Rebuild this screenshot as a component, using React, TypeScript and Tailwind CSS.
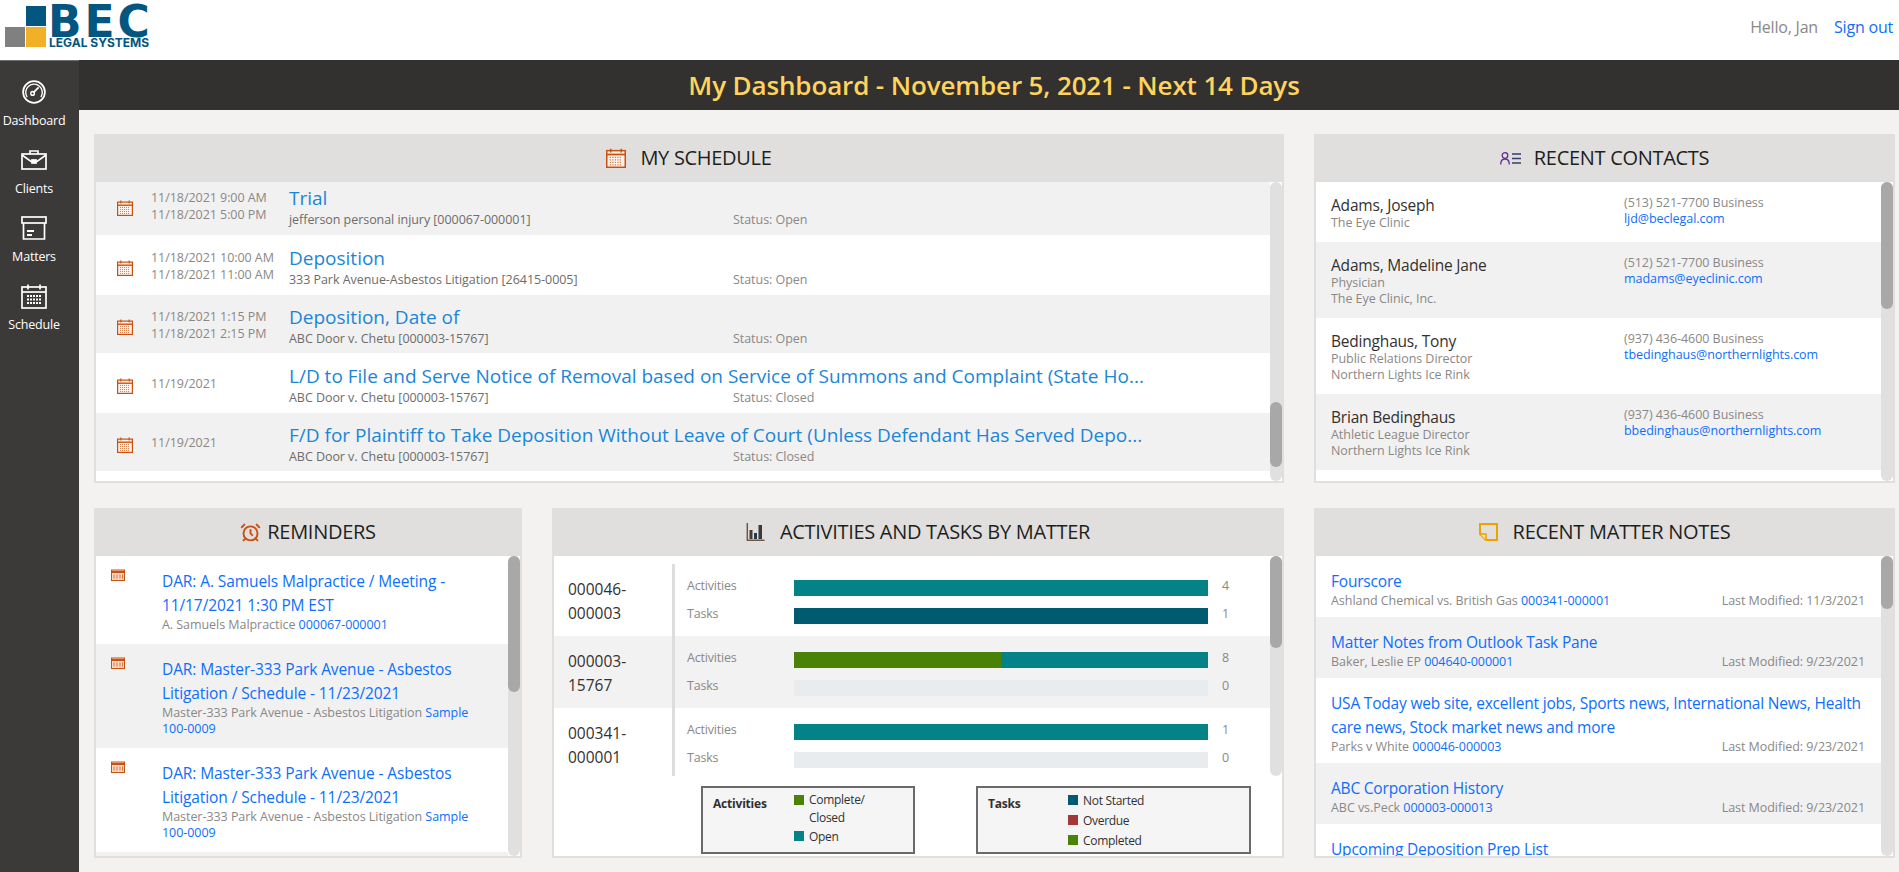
import type { ReactNode } from 'react';
import { AlarmClock } from 'lucide-react';

const FONT = "font-['Open_Sans','Noto_Sans',sans-serif]";

function CalendarIcon({ className }: { className: string }) {
  return (
    <svg viewBox="0 0 16 16" fill="none" className={className}>
      <rect x="0.6" y="2.1" width="14.8" height="13.3" stroke="#ca5010" strokeWidth="1.2" fill="#fdf3ec" />
      <path d="M0.6 5.2h14.8" stroke="#ca5010" strokeWidth="1.4" />
      <path d="M3.8 0.5v3M12.2 0.5v3" stroke="#ca5010" strokeWidth="1.2" />
      <path d="M3 7.5h10M3 9.5h10M3 11.5h10M3 13.5h10" stroke="#ca5010" strokeWidth="1" strokeDasharray="1 1" opacity="0.7" />
    </svg>
  );
}

function ReminderIcon() {
  return (
    <svg viewBox="0 0 14 12" fill="none" className="w-[14px] h-[12px] shrink-0">
      <rect x="0.5" y="1" width="13" height="10.5" stroke="#ca5010" fill="#f7d9c4" />
      <path d="M0.5 3h13" stroke="#ca5010" strokeWidth="2" />
      <path d="M3 5.5v4M6 5.5v4M9 5.5v4M11.5 5.5v4" stroke="#ca5010" strokeWidth="1" opacity="0.75" />
    </svg>
  );
}

function ContactsIcon() {
  return (
    <svg viewBox="0 0 21 13" fill="none" stroke="#5c2e91" strokeWidth="1.3" className="w-[21px] h-[13px]">
      <circle cx="5" cy="3.5" r="2.8" />
      <path d="M0.7 12.5c0-3.5 1.6-5.5 4.3-5.5s4.3 2 4.3 5.5" />
      <path d="M12 2h9M12 6.5h9M12 11h9" stroke="#3b3a6b" />
    </svg>
  );
}

function ChartIcon() {
  return (
    <svg viewBox="0 0 18 18" className="w-[19px] h-[18px]">
      <path d="M0.8 0v17.2H18" fill="none" stroke="#6b5a4a" strokeWidth="1.5" />
      <rect x="3" y="7" width="3" height="9" fill="#4a3a2c" />
      <rect x="7.5" y="10" width="3" height="6" fill="#1f3a54" />
      <rect x="12" y="2" width="3.5" height="14" fill="#3a3a3a" />
    </svg>
  );
}

function NoteIcon() {
  return (
    <svg viewBox="0 0 19 18" fill="none" className="w-[19px] h-[18px]">
      <path d="M1 1h17v16H7L1 11z" stroke="#eaa300" strokeWidth="2" />
      <path d="M1 11h6v6" stroke="#eaa300" strokeWidth="1.5" fill="#f7dc8a" />
    </svg>
  );
}

function GaugeIcon() {
  return (
    <svg viewBox="0 0 26 26" fill="none" stroke="#fff" className="w-[24px] h-[24px]">
      <circle cx="13" cy="13" r="11.8" strokeWidth="1.9" />
      <path d="M5.5 18.5a9 9 0 1 1 15 0" strokeWidth="1.5" />
      <path d="M12 14l6-6" strokeWidth="1.8" />
      <circle cx="11.5" cy="14.5" r="2" strokeWidth="1.5" />
    </svg>
  );
}

function BriefcaseIcon() {
  return (
    <svg viewBox="0 0 26 20" fill="none" stroke="#fff" strokeWidth="1.7" className="w-[26px] h-[20px]">
      <rect x="1" y="4" width="24" height="15" />
      <path d="M9 4V1h8v3" />
      <path d="M1 5l9 6.5h6L25 5" />
      <rect x="11" y="10" width="4" height="3" fill="#fff" />
    </svg>
  );
}

function ArchiveIcon() {
  return (
    <svg viewBox="0 0 26 24" fill="none" stroke="#fff" strokeWidth="1.7" className="w-[26px] h-[24px]">
      <rect x="1" y="1" width="24" height="6" />
      <path d="M2.5 7v16h21V7" />
      <path d="M6 15h7" strokeWidth="2" />
      <path d="M6 19h5" strokeWidth="2" />
    </svg>
  );
}

function ScheduleIcon() {
  return (
    <svg viewBox="0 0 26 25" fill="none" stroke="#fff" strokeWidth="1.7" className="w-[26px] h-[25px]">
      <rect x="1" y="3" width="24" height="21" />
      <path d="M1 8h24" />
      <path d="M7 0.5v5M19 0.5v5" />
      <path d="M6 12h14M6 15.5h14M6 19h14" strokeWidth="2" strokeDasharray="2 1" />
    </svg>
  );
}

function Logo() {
  return (
    <div className="flex items-start pl-[5px] pt-[6px]">
      <div className="grid grid-cols-[20px_20px] grid-rows-[20px_20px] gap-[1px] mr-[2px]">
        <div />
        <div className="bg-[#03567f]" />
        <div className="bg-[#808080]" />
        <div className="bg-[#f2b027]" />
      </div>
      <div className="flex flex-col w-[102px] text-[#03567f]">
        <span className="text-[44px] leading-[31px] h-[32px] font-bold tracking-[3px] font-['DejaVu_Sans',sans-serif]">BEC</span>
        <span className="pl-[1px] text-[12px] leading-[10px] font-bold whitespace-nowrap font-['Inter',sans-serif]">LEGAL SYSTEMS</span>
      </div>
    </div>
  );
}

function Scrollbar({ thumb }: { thumb: string }) {
  return (
    <div className="w-3 shrink-0 rounded-md bg-[#e0e0e0]">
      <div className={`${thumb} rounded-md bg-[#a8a8a8]`} />
    </div>
  );
}

function Panel({ icon, title, gap, width, children }: { icon: ReactNode; title: string; gap: string; width: string; children: ReactNode }) {
  return (
    <section className={`${width} flex flex-col border-x-2 border-b-2 border-[#e1dfdd] bg-white`}>
      <h2 className={`-mx-[2px] h-[48px] shrink-0 bg-[#e1dfdd] flex items-center justify-center ${gap} text-[20px] tracking-[-0.3px] text-[#201f1e] font-medium`}>
        {icon}
        <span>{title}</span>
      </h2>
      {children}
    </section>
  );
}

const scheduleRows = [
  { h: 'h-[60px]', bg: 'bg-[#f1f1f1]', times: ['11/18/2021 9:00 AM', '11/18/2021 5:00 PM'], title: 'Trial', matter: 'jefferson personal injury [000067-000001]', status: 'Open' },
  { h: 'h-[60px]', bg: 'bg-white', times: ['11/18/2021 10:00 AM', '11/18/2021 11:00 AM'], title: 'Deposition', matter: '333 Park Avenue-Asbestos Litigation [26415-0005]', status: 'Open' },
  { h: 'h-[58px]', bg: 'bg-[#f1f1f1]', times: ['11/18/2021 1:15 PM', '11/18/2021 2:15 PM'], title: 'Deposition, Date of', matter: 'ABC Door v. Chetu [000003-15767]', status: 'Open' },
  { h: 'h-[60px]', bg: 'bg-white', times: ['11/19/2021'], title: 'L/D to File and Serve Notice of Removal based on Service of Summons and Complaint (State Ho...', matter: 'ABC Door v. Chetu [000003-15767]', status: 'Closed' },
  { h: 'h-[58px]', bg: 'bg-[#f1f1f1]', times: ['11/19/2021'], title: 'F/D for Plaintiff to Take Deposition Without Leave of Court (Unless Defendant Has Served Depo...', matter: 'ABC Door v. Chetu [000003-15767]', status: 'Closed' },
];

const contacts = [
  { h: 'h-[60px]', bg: 'bg-white', name: 'Adams, Joseph', sub: ['The Eye Clinic'], phone: '(513) 521-7700 Business', email: 'ljd@beclegal.com' },
  { h: 'h-[76px]', bg: 'bg-[#f1f1f1]', name: 'Adams, Madeline Jane', sub: ['Physician', 'The Eye Clinic, Inc.'], phone: '(512) 521-7700 Business', email: 'madams@eyeclinic.com' },
  { h: 'h-[76px]', bg: 'bg-white', name: 'Bedinghaus, Tony', sub: ['Public Relations Director', 'Northern Lights Ice Rink'], phone: '(937) 436-4600 Business', email: 'tbedinghaus@northernlights.com' },
  { h: 'h-[76px]', bg: 'bg-[#f1f1f1]', name: 'Brian Bedinghaus', sub: ['Athletic League Director', 'Northern Lights Ice Rink'], phone: '(937) 436-4600 Business', email: 'bbedinghaus@northernlights.com' },
];

const reminders = [
  { h: 'h-[88px]', bg: 'bg-white', title: ['DAR: A. Samuels Malpractice / Meeting -', '11/17/2021 1:30 PM EST'], matter: 'A. Samuels Malpractice', num: '000067-000001', numBreak: false },
  { h: 'h-[104px]', bg: 'bg-[#f1f1f1]', title: ['DAR: Master-333 Park Avenue - Asbestos', 'Litigation / Schedule - 11/23/2021'], matter: 'Master-333 Park Avenue - Asbestos Litigation', num: 'Sample', numBreak: true },
  { h: 'h-[104px]', bg: 'bg-white', title: ['DAR: Master-333 Park Avenue - Asbestos', 'Litigation / Schedule - 11/23/2021'], matter: 'Master-333 Park Avenue - Asbestos Litigation', num: 'Sample', numBreak: true },
];

const matters = [
  { id: ['000046-', '000003'], h: 'h-[80px]', idPad: 'pt-[21px]', barPad: 'pt-6', rule: 'mt-2', bg: 'bg-white', activities: { done: 0, open: 100, count: 4 }, tasks: { color: 'bg-[#005b70]', w: 'w-full', count: 1 } },
  { id: ['000003-', '15767'], h: 'h-[72px]', idPad: 'pt-[13px]', barPad: 'pt-4', rule: '', bg: 'bg-[#f2f2f2]', activities: { done: 50, open: 50, count: 8 }, tasks: { color: '', w: 'w-0', count: 0 } },
  { id: ['000341-', '000001'], h: 'h-[68px]', idPad: 'pt-[13px]', barPad: 'pt-4', rule: '', bg: 'bg-white', activities: { done: 0, open: 100, count: 1 }, tasks: { color: '', w: 'w-0', count: 0 } },
];

const notes = [
  { h: 'h-[61px]', bg: 'bg-white', title: ['Fourscore'], matter: 'Ashland Chemical vs. British Gas', num: '000341-000001', modified: '11/3/2021' },
  { h: 'h-[61px]', bg: 'bg-[#f1f1f1]', title: ['Matter Notes from Outlook Task Pane'], matter: 'Baker, Leslie EP', num: '004640-000001', modified: '9/23/2021' },
  { h: 'h-[85px]', bg: 'bg-white', title: ['USA Today web site, excellent jobs, Sports news, International News, Health', 'care news, Stock market news and more'], matter: 'Parks v White', num: '000046-000003', modified: '9/23/2021' },
  { h: 'h-[61px]', bg: 'bg-[#f1f1f1]', title: ['ABC Corporation History'], matter: 'ABC vs.Peck', num: '000003-000013', modified: '9/23/2021' },
];

const navItems = [
  { label: 'Dashboard', icon: <GaugeIcon />, pad: 'pt-[18px]' },
  { label: 'Clients', icon: <BriefcaseIcon />, pad: 'pt-[16px]' },
  { label: 'Matters', icon: <ArchiveIcon />, pad: 'pt-[16px]' },
  { label: 'Schedule', icon: <ScheduleIcon />, pad: 'pt-[16px]' },
];

function Sidebar() {
  return (
    <aside className="w-[79px] shrink-0 pr-[11px] bg-[#3b3a39] border-t border-[#6e6d6c] flex flex-col items-center">
      {navItems.map((item) => (
        <a key={item.label} className={`${item.pad} flex flex-col items-center text-white`}>
          <div className="h-[26px] flex items-center justify-center">{item.icon}</div>
          <span className="mt-[6px] text-[12.5px] leading-[20px] tracking-[-0.2px]">{item.label}</span>
        </a>
      ))}
    </aside>
  );
}

function Legend({ label, width, labelWidth, children }: { label: string; width: string; labelWidth: string; children: ReactNode }) {
  return (
    <div className={`${width} h-[68px] border-2 border-[#6b6b6b] bg-[#f5f5f5] flex pl-[10px] pt-[5px] text-[12px] text-[#323130]`}>
      <div className={`${labelWidth} shrink-0 font-bold leading-[20px] pt-[1px] tracking-[-0.2px]`}>{label}</div>
      <div className="-mt-[1px]">{children}</div>
    </div>
  );
}

function Swatch({ color, children }: { color: string; children: ReactNode }) {
  return (
    <div className="flex items-start gap-[5px] leading-[18px] tracking-[-0.3px] mb-[2px]">
      <span className={`${color} w-[10px] h-[10px] mt-[3px] shrink-0`} />
      <span>{children}</span>
    </div>
  );
}

function Bar({ label, count, children }: { label: string; count: number; children: ReactNode }) {
  return (
    <div className="flex items-center h-[16px] mb-[12px]">
      <span className="w-[107px] text-[12.5px] text-[#8a8886] tracking-[-0.2px] -mt-[4px]">{label}</span>
      <div className="w-[414px] h-[16px] bg-[#e9ecef] flex">{children}</div>
      <span className="ml-[14px] text-[12.5px] text-[#8a8886] -mt-[4px]">{count}</span>
    </div>
  );
}

export default function App() {
  return (
    <div className={`h-[872px] w-[1899px] overflow-hidden flex flex-col bg-white ${FONT}`}>
      <header className="h-[60px] shrink-0 flex justify-between">
        <Logo />
        <div className="flex items-start pt-[15px] pr-[6px] text-[16px] leading-[24px] tracking-[-0.2px]">
          <span className="text-[#8a8886]">Hello, Jan</span>
          <a className="ml-[16px] text-[#0d6efd]">Sign out</a>
        </div>
      </header>
      <div className="flex flex-1 min-h-0">
        <Sidebar />
        <main className="flex-1 flex flex-col min-w-0 bg-[#f3f2f1]">
          <h1 className="h-[50px] shrink-0 pl-[10px] bg-[#323130] flex items-center justify-center text-[26px] font-semibold text-[#ffd35c] tracking-[-0.13px]">
            My Dashboard - November 5, 2021 - Next 14 Days
          </h1>
          <div className="flex flex-col gap-[25px] pt-[24px] pl-[15px]">
            <div className="flex gap-[30px] h-[349px]">
              <Panel width="w-[1190px]" gap="gap-[14px]" title="MY SCHEDULE" icon={<CalendarIcon className="w-[20px] h-[20px]" />}>
                <div className="flex flex-1 min-h-0">
                  <div className="flex-1 overflow-hidden">
                    <div className="-mt-[7px]">
                      {scheduleRows.map((row) => (
                        <div key={row.title} className={`${row.h} ${row.bg} flex items-center`}>
                          <CalendarIcon className="w-[16px] h-[16px] ml-[21px] mt-[6px] shrink-0" />
                          <div className="w-[137px] ml-[18px] pt-[1px] shrink-0 text-[12.5px] leading-[17px] text-[#8a8886] tracking-[-0.05px]">
                            {row.times.map((t) => (
                              <div key={t}>{t}</div>
                            ))}
                          </div>
                          <div className="flex-1 min-w-0 pt-[5px] pl-[1px]">
                            <div className="text-[19px] leading-[24px] text-[#1a86d8] whitespace-nowrap">{row.title}</div>
                            <div className="mt-[1px] flex text-[12.5px] leading-[18px] text-[#6e6c6a] tracking-[-0.05px]">
                              <span className="w-[444px]">{row.matter}</span>
                              <span className="text-[#8a8886]">Status: {row.status}</span>
                            </div>
                          </div>
                        </div>
                      ))}
                    </div>
                  </div>
                  <div className="flex flex-col w-3 rounded-md bg-[#e0e0e0] shrink-0 pt-[220px]">
                    <div className="h-[65px] rounded-md bg-[#a8a8a8]" />
                  </div>
                </div>
              </Panel>
              <Panel width="w-[581px]" gap="gap-[13px]" title="RECENT CONTACTS" icon={<ContactsIcon />}>
                <div className="flex flex-1 min-h-0">
                  <div className="flex-1 overflow-hidden">
                    {contacts.map((c) => (
                      <div key={c.name} className={`${c.h} ${c.bg} flex pl-[15px] pt-[13px]`}>
                        <div className="w-[293px] shrink-0">
                          <div className="text-[15.5px] leading-[20px] text-[#323130] tracking-[-0.2px]">{c.name}</div>
                          {c.sub.map((s) => (
                            <div key={s} className="text-[12.5px] leading-[16px] text-[#8a8886] tracking-[-0.05px]">{s}</div>
                          ))}
                        </div>
                        <div className="text-[12.5px] leading-[16px] tracking-[-0.05px]">
                          <div className="text-[#8a8886]">{c.phone}</div>
                          <div className="text-[#0d6efd]">{c.email}</div>
                        </div>
                      </div>
                    ))}
                  </div>
                  <Scrollbar thumb="h-[127px]" />
                </div>
              </Panel>
            </div>
            <div className="flex gap-[30px] h-[350px]">
              <Panel width="w-[428px]" gap="gap-[6px]" title="REMINDERS" icon={<AlarmClock className="w-[21px] h-[21px] text-[#ca5010]" strokeWidth={2.2} />}>
                <div className="flex flex-1 min-h-0">
                  <div className="flex-1 overflow-hidden">
                    {reminders.map((r, i) => (
                      <div key={i} className={`${r.h} ${r.bg} flex pl-[15px] pt-[13px]`}>
                        <ReminderIcon />
                        <div className="ml-[37px] min-w-0">
                          <div className="text-[15.5px] leading-[24px] text-[#0d6efd] tracking-[-0.1px] whitespace-nowrap">
                            {r.title.map((t) => (
                              <div key={t}>{t}</div>
                            ))}
                          </div>
                          <div className="text-[12.5px] leading-[16px] text-[#8a8886] tracking-[-0.05px]">
                            {r.matter} <span className="text-[#0d6efd]">{r.num}</span>
                            {r.numBreak && <div className="text-[#0d6efd]">100-0009</div>}
                          </div>
                        </div>
                      </div>
                    ))}
                    <div className="h-[10px] bg-[#f1f1f1]" />
                  </div>
                  <Scrollbar thumb="h-[136px]" />
                </div>
              </Panel>
              <Panel width="w-[732px]" gap="gap-[15px]" title="ACTIVITIES AND TASKS BY MATTER" icon={<ChartIcon />}>
                <div className="flex h-[220px] shrink-0">
                  <div className="flex-1 overflow-hidden">
                    {matters.map((m) => (
                      <div key={m.id[0]} className={`${m.h} ${m.bg} flex`}>
                        <div className={`${m.idPad} w-[118px] shrink-0 pl-[14px] text-[15.5px] leading-[24px] text-[#323130]`}>
                          {m.id.map((part) => (
                            <div key={part}>{part}</div>
                          ))}
                        </div>
                        <div className={`${m.rule} w-[3px] shrink-0 bg-[#dddddd]`} />
                        <div className={`${m.barPad} pl-[12px]`}>
                          <Bar label="Activities" count={m.activities.count}>
                            <div className="h-full bg-[#498205]" style={{ width: `${m.activities.done}%` }} />
                            <div className="h-full bg-[#038387]" style={{ width: `${m.activities.open}%` }} />
                          </Bar>
                          <Bar label="Tasks" count={m.tasks.count}>
                            <div className={`${m.tasks.color} ${m.tasks.w} h-full`} />
                          </Bar>
                        </div>
                      </div>
                    ))}
                  </div>
                  <Scrollbar thumb="h-[92px]" />
                </div>
                <div className="flex pt-[10px] pl-[147px] gap-[61px]">
                  <Legend width="w-[214px]" labelWidth="w-[81px]" label="Activities">
                    <div className="flex items-start gap-[5px] leading-[18px] tracking-[-0.3px] mb-[1px] -mt-[1px]">
                      <span className="bg-[#498205] w-[10px] h-[10px] mt-[4px] shrink-0" />
                      <span>
                        Complete/
                        <br />
                        Closed
                      </span>
                    </div>
                    <Swatch color="bg-[#038387]">Open</Swatch>
                  </Legend>
                  <Legend width="w-[275px]" labelWidth="w-[80px]" label="Tasks">
                    <Swatch color="bg-[#005b70]">Not Started</Swatch>
                    <Swatch color="bg-[#a4373a]">Overdue</Swatch>
                    <Swatch color="bg-[#498205]">Completed</Swatch>
                  </Legend>
                </div>
              </Panel>
              <Panel width="w-[581px]" gap="gap-[15px]" title="RECENT MATTER NOTES" icon={<NoteIcon />}>
                <div className="flex flex-1 min-h-0">
                  <div className="flex-1 overflow-hidden">
                    {notes.map((n) => (
                      <div key={n.title[0]} className={`${n.h} ${n.bg} pl-[15px] pr-[16px] pt-[13px]`}>
                        <div className="text-[15.5px] leading-[24px] text-[#0d6efd] tracking-[-0.2px] whitespace-nowrap">
                          {n.title.map((t) => (
                            <div key={t}>{t}</div>
                          ))}
                        </div>
                        <div className="flex justify-between text-[12.5px] leading-[16px] text-[#8a8886] tracking-[-0.05px]">
                          <span>
                            {n.matter} <span className="text-[#0d6efd]">{n.num}</span>
                          </span>
                          <span>Last Modified: {n.modified}</span>
                        </div>
                      </div>
                    ))}
                    <div className="pl-[15px] pt-[13px] text-[15.5px] leading-[24px] text-[#0d6efd] tracking-[-0.2px]">Upcoming Deposition Prep List</div>
                  </div>
                  <Scrollbar thumb="h-[53px]" />
                </div>
              </Panel>
            </div>
          </div>
        </main>
      </div>
    </div>
  );
}
